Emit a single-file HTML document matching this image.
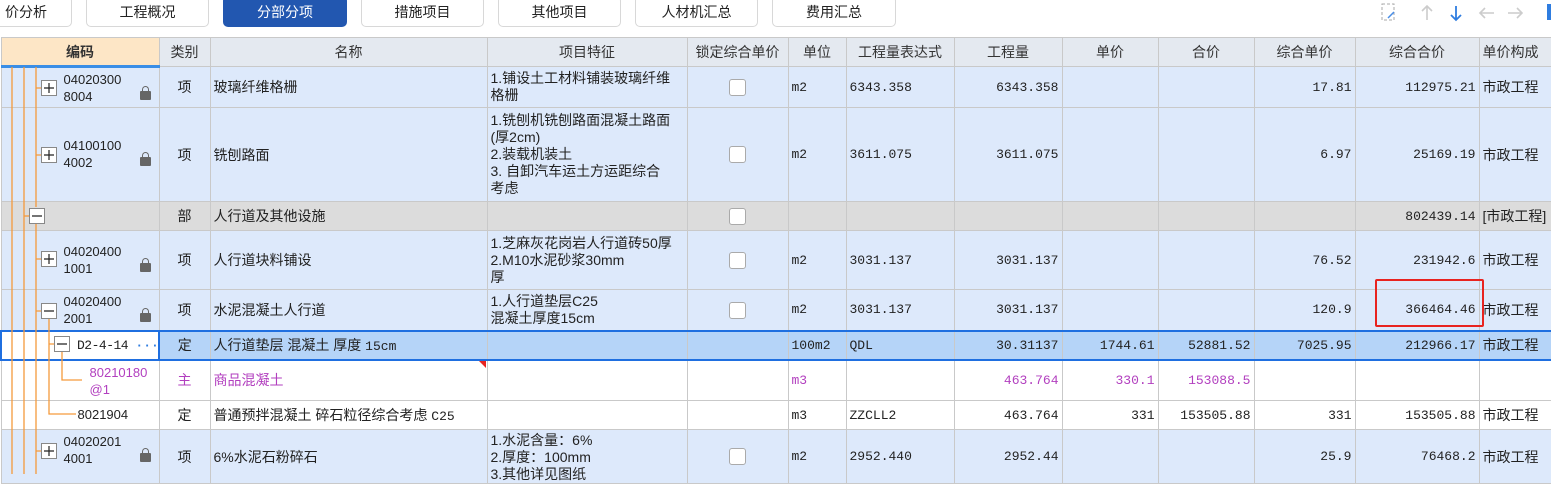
<!DOCTYPE html>
<html><head><meta charset="utf-8">
<style>
*{margin:0;padding:0;box-sizing:border-box}
body{width:1551px;height:474px;overflow:hidden;background:#fff;font-family:"Liberation Sans","Noto Sans CJK SC",sans-serif;font-size:14px;color:#222;position:relative}
.tab{position:absolute;top:-4px;height:31px;border:1px solid #d8d8d8;border-radius:5px;background:#fff;text-align:center;line-height:31px;font-size:14px;color:#222}
.tab.on{background:#2257b0;color:#fff;border-color:#2257b0}
table{position:absolute;left:0;top:37px;border-collapse:collapse;table-layout:fixed;width:1551px}
td,th{border:1px solid #c9c9c9;overflow:hidden;white-space:nowrap;padding:0 3px;font-weight:normal;vertical-align:middle}
th{background:#e4e9f0;height:29px;font-size:14px;color:#333}
th.code{background:#fde6c6;font-weight:bold;border-bottom:3px solid #3a8ee6}
tr.b td{background:#dde9fb}
tr.g td{background:#dcdcdc}
tr.w td{background:#fff}
tr.s td{background:#b5d4f8}
.m{font-family:"Liberation Mono","Noto Sans CJK SC",monospace;font-size:13px}
.r{text-align:right}
.c{text-align:center}
.f{white-space:normal;line-height:17px;font-size:14px}
.cb{display:inline-block;width:17px;height:17px;border:1px solid #aaa;border-radius:3px;background:#fff;vertical-align:middle}
.p{color:#b23fbf}
.code{position:relative}
.num{position:absolute;left:62px;line-height:17px;font-size:13px;font-family:"Liberation Sans",sans-serif}
.lock{position:absolute;left:138px;width:11px;height:9px;background:#666;border-radius:1px}
.lock:before{content:"";position:absolute;left:2px;top:-5px;width:7px;height:7px;border:1.5px solid #666;border-bottom:none;border-radius:4px 4px 0 0;box-sizing:border-box}
.sb{border-top:2px solid #1f6fe0 !important;border-bottom:2px solid #1f6fe0 !important}
</style></head><body>
<div class="tab" style="left:-20px;width:92px">价分析</div>
<div class="tab" style="left:86px;width:123px">工程概况</div>
<div class="tab on" style="left:223px;width:124px">分部分项</div>
<div class="tab" style="left:361px;width:123px">措施项目</div>
<div class="tab" style="left:498px;width:123px">其他项目</div>
<div class="tab" style="left:635px;width:123px">人材机汇总</div>
<div class="tab" style="left:772px;width:124px">费用汇总</div>
<svg style="position:absolute;left:1380px;top:2px" width="171" height="22">
<rect x="2" y="2" width="12" height="16" fill="none" stroke="#aaa" stroke-dasharray="3 2"/>
<path d="M8 16 l6 -6" stroke="#4a8de6" stroke-width="1.5"/>
<path d="M47 4v14M42 9l5-5 5 5" stroke="#ccc" stroke-width="1.6" fill="none"/>
<path d="M76 4v14M71 13l5 5 5-5" stroke="#2f7de0" stroke-width="1.8" fill="none"/>
<path d="M100 11h14M105 6l-5 5 5 5" stroke="#ccc" stroke-width="1.6" fill="none"/>
<path d="M128 11h14M137 6l5 5-5 5" stroke="#ccc" stroke-width="1.6" fill="none"/>
<rect x="167" y="2" width="4" height="16" fill="#2f7de0"/>
</svg>
<table>
<colgroup><col style="width:158px"><col style="width:51px"><col style="width:277px"><col style="width:200px"><col style="width:101px"><col style="width:58px"><col style="width:108px"><col style="width:108px"><col style="width:96px"><col style="width:96px"><col style="width:101px"><col style="width:124px"><col style="width:73px"></colgroup>
<tr><th class="code">编码</th><th>类别</th><th>名称</th><th>项目特征</th><th>锁定综合单价</th><th>单位</th><th>工程量表达式</th><th>工程量</th><th>单价</th><th>合价</th><th>综合单价</th><th>综合合价</th><th style="text-align:left">单价构成</th></tr>
<tr class="b" style="height:41px"><td class="code"><span class="num" style="top:3px">04020300<br>8004</span><span class="lock" style="top:23px"></span></td><td class="c">项</td><td>玻璃纤维格栅</td><td class="f">1.铺设土工材料铺装玻璃纤维格栅</td><td class="c"><span class="cb"></span></td><td class="m">m2</td><td class="m">6343.358</td><td class="m r">6343.358</td><td></td><td></td><td class="m r">17.81</td><td class="m r">112975.21</td><td>市政工程</td></tr>
<tr class="b" style="height:94px"><td class="code"><span class="num" style="top:29px">04100100<br>4002</span><span class="lock" style="top:49px"></span></td><td class="c">项</td><td>铣刨路面</td><td class="f">1.铣刨机铣刨路面混凝土路面(厚2cm)<br>2.装载机装土<br>3. 自卸汽车运土方运距综合<br>考虑</td><td class="c"><span class="cb"></span></td><td class="m">m2</td><td class="m">3611.075</td><td class="m r">3611.075</td><td></td><td></td><td class="m r">6.97</td><td class="m r">25169.19</td><td>市政工程</td></tr>
<tr class="g" style="height:29px"><td></td><td class="c">部</td><td>人行道及其他设施</td><td></td><td class="c"><span class="cb"></span></td><td></td><td></td><td></td><td></td><td></td><td></td><td class="m r">802439.14</td><td>[市政工程]</td></tr>
<tr class="b" style="height:59px"><td class="code"><span class="num" style="top:12px">04020400<br>1001</span><span class="lock" style="top:32px"></span></td><td class="c">项</td><td>人行道块料铺设</td><td class="f">1.芝麻灰花岗岩人行道砖50厚<br>2.M10水泥砂浆30mm<br>厚</td><td class="c"><span class="cb"></span></td><td class="m">m2</td><td class="m">3031.137</td><td class="m r">3031.137</td><td></td><td></td><td class="m r">76.52</td><td class="m r">231942.6</td><td>市政工程</td></tr>
<tr class="b" style="height:41px"><td class="code"><span class="num" style="top:3px">04020400<br>2001</span><span class="lock" style="top:23px"></span></td><td class="c">项</td><td>水泥混凝土人行道</td><td class="f">1.人行道垫层C25<br>混凝土厚度15cm</td><td class="c"><span class="cb"></span></td><td class="m">m2</td><td class="m">3031.137</td><td class="m r">3031.137</td><td></td><td></td><td class="m r">120.9</td><td class="m r">366464.46</td><td>市政工程</td></tr>
<tr class="s" style="height:29px"><td class="code" style="background:#fff;border:2px solid #1f6fe0"><span class="num" style="left:75px;top:5px;font-family:'Liberation Mono',monospace;letter-spacing:-0.5px">D2-4-14 <span style="color:#2f7de0;font-weight:bold;letter-spacing:0">···</span></span></td><td class="c sb">定</td><td class="sb">人行道垫层 混凝土 厚度 <span class="m">15cm</span></td><td class="sb"></td><td class="sb"></td><td class="m sb">100m2</td><td class="m sb">QDL</td><td class="m r sb">30.31137</td><td class="m r sb">1744.61</td><td class="m r sb">52881.52</td><td class="m r sb">7025.95</td><td class="m r sb">212966.17</td><td class="sb">市政工程</td></tr>
<tr class="w" style="height:41px"><td class="code"><span class="num p" style="left:88px;top:3px">80210180<br>@1</span></td><td class="c p">主</td><td class="p">商品混凝土</td><td></td><td></td><td class="m p">m3</td><td></td><td class="m r p">463.764</td><td class="m r p">330.1</td><td class="m r p">153088.5</td><td></td><td></td><td></td></tr>
<tr class="w" style="height:29px"><td class="code"><span class="num" style="left:76px;top:5px">8021904</span></td><td class="c">定</td><td>普通预拌混凝土 碎石粒径综合考虑 <span class="m">C25</span></td><td></td><td></td><td class="m">m3</td><td class="m">ZZCLL2</td><td class="m r">463.764</td><td class="m r">331</td><td class="m r">153505.88</td><td class="m r">331</td><td class="m r">153505.88</td><td>市政工程</td></tr>
<tr class="b" style="height:50px"><td class="code"><span class="num" style="top:3px">04020201<br>4001</span><span class="lock" style="top:23px"></span></td><td class="c">项</td><td>6%水泥石粉碎石</td><td class="f" style="vertical-align:top;padding-top:2px">1.水泥含量：6%<br>2.厚度：100mm<br>3.其他详见图纸</td><td class="c"><span class="cb"></span></td><td class="m">m2</td><td class="m">2952.440</td><td class="m r">2952.44</td><td></td><td></td><td class="m r">25.9</td><td class="m r">76468.2</td><td>市政工程</td></tr>
</table>
<svg style="position:absolute;left:0;top:0" width="100" height="474">
<g stroke="#f59a3c" stroke-width="1.3" fill="none">
<path d="M12 67V474M24 67V474M36 67V207M36 223V474"/>
<path d="M36 88H41M36 155H41M36 259H41M36 311H41M36 451H41"/>
<path d="M49 319V414H76M62 352V380H82M49 344H54"/>
<path d="M24 216H29"/>
</g>
<g fill="#fff" stroke="#888">
<rect x="41.5" y="80.5" width="15" height="15"/><rect x="41.5" y="147.5" width="15" height="15"/>
<rect x="29.5" y="208.5" width="15" height="15"/>
<rect x="41.5" y="251.5" width="15" height="15"/><rect x="41.5" y="303.5" width="15" height="15"/>
<rect x="54.5" y="336.5" width="15" height="15"/><rect x="41.5" y="443.5" width="15" height="15"/>
</g>
<g stroke="#222" stroke-width="1.2">
<path d="M44 88h10M49 83v10M44 155h10M49 150v10M32 216h10M44 259h10M49 254v10M44 311h10M57 344h10M44 451h10M49 446v10"/>
</g>
</svg>
<div style="position:absolute;left:1375px;top:279px;width:109px;height:48px;border:2.5px solid #e8231f;border-radius:2px"></div>
<div style="position:absolute;left:479px;top:361px;width:0;height:0;border-top:7px solid #e8231f;border-left:7px solid transparent"></div>
</body></html>
